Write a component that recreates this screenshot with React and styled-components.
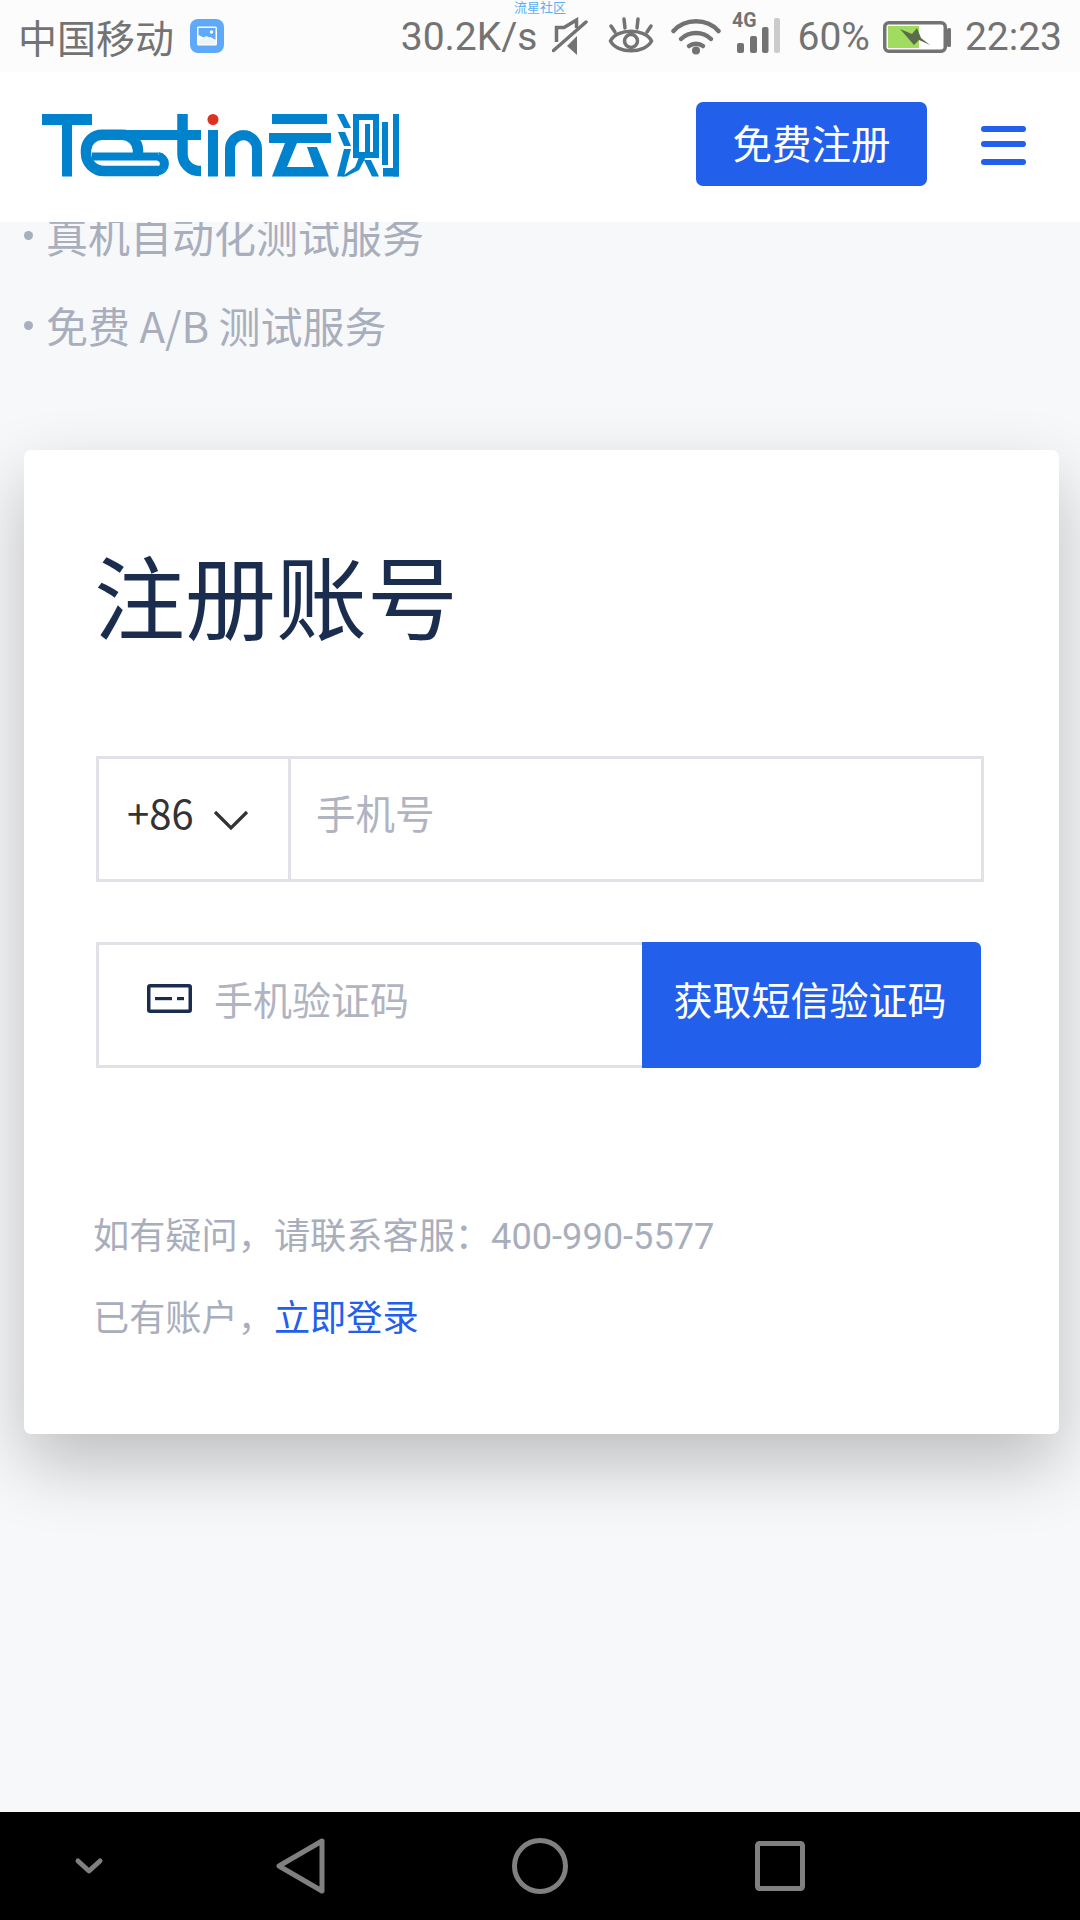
import React from 'react';
import styled, { createGlobalStyle } from 'styled-components';

const CJK = `"Noto Sans CJK SC", "Noto Sans", sans-serif`;
const ROBOTO = `Roboto, "Noto Sans CJK SC", sans-serif`;

const Global = createGlobalStyle`
  html, body { margin: 0; padding: 0; background: #f7f8fa; }
  * { box-sizing: border-box; }
`;

const Screen = styled.div`
  width: 1080px;
  height: 1920px;
  display: flex;
  flex-direction: column;
  overflow: hidden;
  background: #f7f8fa;
  font-family: ${CJK};
`;

const StatusBar = styled.div`
  position: relative;
  height: 72px;
  flex: none;
  display: flex;
  align-items: center;
  padding: 0 18px 0 18px;
  background: #fcfcfc;
  color: #737373;
  font-family: ${ROBOTO};
  font-size: 39px;
  z-index: 3;
`;
const Carrier = styled.span`
  font-family: ${CJK};
  font-size: 39px;
  line-height: 72px;
`;
const Spacer = styled.div`flex: 1;`;
const StatusText = styled.span`
  margin-left: ${p => p.$ml || 0}px;
  margin-right: ${p => p.$mr || 0}px;
  padding-top: 2px;
`;
const Watermark = styled.span`
  position: absolute;
  left: 514px;
  top: 0;
  font-family: ${CJK};
  font-size: 13px;
  line-height: 13px;
  color: #5ab0f5;
`;
const Glyph = styled.svg`
  flex: none;
  display: block;
  margin-left: ${p => p.$ml || 0}px;
  margin-right: ${p => p.$mr || 0}px;
  margin-top: ${p => p.$mt || 0}px;
  margin-bottom: ${p => p.$mb || 0}px;
`;

const Header = styled.header`
  height: 150px;
  flex: none;
  display: flex;
  align-items: center;
  padding: 0 54px 0 41px;
  background: #fff;
  position: relative;
  z-index: 2;
`;
const RegisterButton = styled.button`
  width: 231px;
  height: 84px;
  margin: 0 0 6px auto;
  border: 0;
  border-radius: 7px;
  background: #2260ec;
  color: #fff;
  font-family: ${CJK};
  font-size: 39.5px;
  padding: 0 0 6px;
`;
const Burger = styled.div`
  width: 45px;
  margin: 0 0 3px 54px;
  display: flex;
  flex-direction: column;
  gap: 9px;
`;
const BurgerBar = styled.i`
  display: block;
  height: 6px;
  border-radius: 3px;
  background: #2260ec;
  &:last-child { margin-top: 3px; }
`;

const Main = styled.main`
  flex: 1;
  display: flex;
  flex-direction: column;
  margin-top: -32px;
`;
const Feature = styled.div`
  height: 90px;
  display: flex;
  align-items: center;
  padding-left: 24px;
  color: #a9aebd;
  font-size: 42px;
  line-height: 90px;
`;
const Bullet = styled.i`
  width: 9px;
  height: 9px;
  border-radius: 50%;
  background: #a9aebd;
  margin-right: 13px;
`;

const Card = styled.section`
  margin: 80px 21px 0 24px;
  height: 984px;
  padding: 83px 78px 0 72px;
  background: #fff;
  border-radius: 7px;
  box-shadow: 0 30px 70px rgba(0, 0, 0, 0.24);
`;
const Title = styled.h1`
  margin: 0 0 0 -2px;
  font-size: 91px;
  font-weight: 400;
  line-height: 120px;
  color: #1a2d4f;
`;
const PhoneRow = styled.div`
  margin: 103px -3px 0 0;
  height: 126px;
  display: flex;
  border: 3px solid #e1e2e7;
`;
const CodeSelect = styled.div`
  width: 192px;
  flex: none;
  display: flex;
  align-items: center;
  padding: 0 0 14px 28px;
  border-right: 3px solid #e1e2e7;
  color: #333;
  font-size: 40px;
`;
const Placeholder = styled.span`
  color: #b0b4c1;
  font-size: ${p => p.$size}px;
  line-height: 1;
`;
const PhoneField = styled.div`
  flex: 1;
  display: flex;
  align-items: center;
  padding: 0 0 14px 25px;
`;
const SmsRow = styled.div`
  margin-top: 60px;
  width: 885px;
  height: 126px;
  display: flex;
`;
const SmsField = styled.div`
  flex: 1;
  display: flex;
  align-items: center;
  padding: 0 0 14px 48px;
  border: 3px solid #e1e2e7;
  border-right: 0;
`;
const SmsButton = styled.button`
  width: 339px;
  flex: none;
  border: 0;
  padding: 0 3px 14px 0;
  background: #2260ec;
  color: #fff;
  font-family: ${CJK};
  font-size: 39px;
  border-radius: 0 6px 6px 0;
`;
const Help = styled.p`
  margin: ${p => p.$mt}px 0 0 -3px;
  color: #a9aebd;
  font-family: ${ROBOTO};
  font-size: 36.2px;
  line-height: 82px;
`;
const Link = styled.a`color: #2260ec;`;

const NavBar = styled.nav`
  height: 108px;
  flex: none;
  margin-top: auto;
  background: #000;
  display: flex;
  align-items: center;
  padding-left: 74px;
`;

const LogoMark = styled.svg`
  display: block;
  flex: none;
  margin-bottom: 4px;
`;

const Logo = () => (
  <LogoMark width="360" height="66" viewBox="41 112 360 66">
    <g fill="#0082cd">
      <rect x="42" y="114" width="50" height="11" />
      <rect x="62" y="114" width="10" height="62.5" />
      <rect x="208" y="130" width="10" height="46.5" />
      <rect x="272" y="114" width="55" height="10" />
      <rect x="269" y="133" width="62" height="10" />
      <path d="M285 143H297L287 167H314L307 147H317L329 176.5H272Z" />
      <path d="M337 114H344L351 128H344ZM338 132H345L351 146H344ZM344 149H351L344 176.5H337Z" />
      <path fillRule="evenodd" d="M353 114H379V158H353ZM359 120V152H373V120Z" />
      <rect x="365" y="124" width="5" height="30" />
      <path d="M359 157H366L359 170L346 176.5H342L355 167ZM364 160H371L379 176.5H372Z" />
      <rect x="382" y="122" width="6" height="43" />
      <rect x="393" y="114" width="6" height="62.5" />
      <rect x="383" y="168" width="16" height="8.5" />
    </g>
    <g fill="none" stroke="#0082cd">
      <path strokeWidth="10.5" d="M159 171H104A18 18 0 0 1 86 153V150A16 16 0 0 1 102 134.7H122A16 16 0 0 1 138 150V156" />
      <path strokeWidth="8" d="M92 156.5H158" />
      <path strokeWidth="9" d="M158 156.5A7.3 7.3 0 0 1 158 171" />
      <path strokeWidth="10" d="M122 135H201" />
      <path strokeWidth="10.5" d="M182.5 114V154A17 17 0 0 0 199.5 171H201" />
      <path strokeWidth="10" d="M230 176.5V149A14 14 0 0 1 244 135H243A14 14 0 0 1 257 149V176.5" />
    </g>
    <circle cx="213" cy="119.5" r="5.5" fill="#dc3320" />
  </LogoMark>
);

const App = () => (
  <Screen>
    <Global />
    <StatusBar>
      <Watermark>流星社区</Watermark>
      <Carrier>中国移动</Carrier>
      <Glyph $ml={16} width="34" height="34" viewBox="0 0 34 34">
        <rect width="34" height="34" rx="8" fill="#5fa9fb" />
        <rect x="7" y="7.5" width="20" height="19" rx="1.5" fill="#fff" />
        <path d="M8.5 9h17v12l-5-3-4 2-8-4z" fill="#5fa9fb" />
        <circle cx="21.5" cy="13" r="1.7" fill="#fff" />
        <path d="M8.5 21l8-4 4 2 5 2v4h-17z" fill="#eef3f6" />
      </Glyph>
      <Spacer />
      <StatusText $mr={15}>30.2K/s</StatusText>
      <Glyph width="36" height="38" viewBox="0 0 36 38" fill="none" stroke="#737373" strokeWidth="3.5">
        <path d="M4.5 25V10.5H12L24.5 3V11" />
        <path d="M1.5 33.5L34 5" strokeLinecap="round" />
        <path d="M15 29L25 19V38Z" fill="#737373" stroke="none" />
      </Glyph>
      <Glyph $ml={20} width="46" height="38" viewBox="0 0 46 38" fill="none" stroke="#737373">
        <path d="M2.5 24C9 11 37 11 43.5 24 37 37 9 37 2.5 24z" strokeWidth="3.5" />
        <circle cx="23" cy="24" r="6.5" strokeWidth="3.5" />
        <path d="M3 9l4 6M16 2l1 9M30 2l-1 9M43 9l-4 6" strokeWidth="3.5" strokeLinecap="round" />
      </Glyph>
      <Glyph $ml={17} width="50" height="38" viewBox="0 0 50 38" fill="none" stroke="#737373" strokeWidth="4.5" strokeLinecap="round">
        <path d="M2.5 14C14 1 36 1 47.5 14" />
        <path d="M10 22c8-8 22-8 30 0" />
        <path d="M18 29c4-3 10-3 14 0" />
        <circle cx="25" cy="33.5" r="4" fill="#737373" stroke="none" />
      </Glyph>
      <Glyph $ml={11} $mb={8} width="48" height="46" viewBox="0 -4 48 46">
        <text x="0" y="14" fontFamily="Roboto, sans-serif" fontWeight="700" fontSize="19.5" fill="#737373">4G</text>
        <rect x="5" y="30" width="7" height="10" rx="2" fill="#737373" />
        <rect x="18" y="23" width="7" height="17" rx="2" fill="#737373" />
        <rect x="30" y="14" width="6.5" height="26" rx="2" fill="#737373" />
        <rect x="42" y="5" width="6" height="35" rx="2" fill="#cccccc" />
      </Glyph>
      <StatusText $ml={17}>60%</StatusText>
      <Glyph $ml={13} $mt={2} width="68" height="32" viewBox="0 0 68 32">
        <rect x="1.75" y="1.75" width="60.5" height="28.5" rx="4" fill="#fff" stroke="#737373" strokeWidth="3.5" />
        <rect x="5" y="5" width="31" height="22" fill="#a0dc60" />
        <rect x="64" y="7" width="4" height="19" rx="1.5" fill="#737373" />
        <path d="M17 8L29 13L34 7L38 17L47 24L36 19L31 24Z" fill="#5c6b4a" />
      </Glyph>
      <StatusText $ml={14}>22:23</StatusText>
    </StatusBar>

    <Header>
      <Logo />
      <RegisterButton>免费注册</RegisterButton>
      <Burger>
        <BurgerBar />
        <BurgerBar />
        <BurgerBar />
      </Burger>
    </Header>

    <Main>
      <Feature><Bullet />真机自动化测试服务</Feature>
      <Feature><Bullet />免费 A/B 测试服务</Feature>
      <Card>
        <Title>注册账号</Title>
        <PhoneRow>
          <CodeSelect>
            +86
            <Glyph $ml={19} $mt={15} width="36" height="22" viewBox="0 0 36 22" fill="none" stroke="#333" strokeWidth="3.2">
              <path d="M2 3l16 16L34 3" />
            </Glyph>
          </CodeSelect>
          <PhoneField><Placeholder $size={39.5}>手机号</Placeholder></PhoneField>
        </PhoneRow>
        <SmsRow>
          <SmsField>
            <Glyph $mr={22} width="45" height="29" viewBox="0 0 45 29">
              <rect x="1.75" y="1.75" width="41.5" height="25.5" rx="1.5" fill="none" stroke="#1a2d4f" strokeWidth="3.5" />
              <rect x="8" y="13" width="17" height="3.2" fill="#1a2d4f" />
              <rect x="30" y="13" width="7" height="3.2" fill="#1a2d4f" />
            </Glyph>
            <Placeholder $size={39}>手机验证码</Placeholder>
          </SmsField>
          <SmsButton>获取短信验证码</SmsButton>
        </SmsRow>
        <Help $mt={128}>如有疑问，请联系客服：400-990-5577</Help>
        <Help $mt={0}>已有账户，<Link>立即登录</Link></Help>
      </Card>
      <NavBar>
        <Glyph width="30" height="18" viewBox="0 0 30 18" fill="none" stroke="#808080" strokeWidth="5" strokeLinecap="round" strokeLinejoin="round">
          <path d="M4 4l11 10L26 4" />
        </Glyph>
        <Glyph $ml={172} width="50" height="56" viewBox="0 0 50 56" fill="none" stroke="#808080" strokeWidth="5" strokeLinejoin="round">
          <path d="M46 3L3 28l43 25z" />
        </Glyph>
        <Glyph $ml={186} width="56" height="56" viewBox="0 0 56 56" fill="none" stroke="#808080" strokeWidth="5">
          <circle cx="28" cy="28" r="25.5" />
        </Glyph>
        <Glyph $ml={187} width="50" height="50" viewBox="0 0 50 50" fill="none" stroke="#808080" strokeWidth="5">
          <rect x="2.5" y="2.5" width="45" height="45" rx="2" />
        </Glyph>
      </NavBar>
    </Main>
  </Screen>
);

export default App;
